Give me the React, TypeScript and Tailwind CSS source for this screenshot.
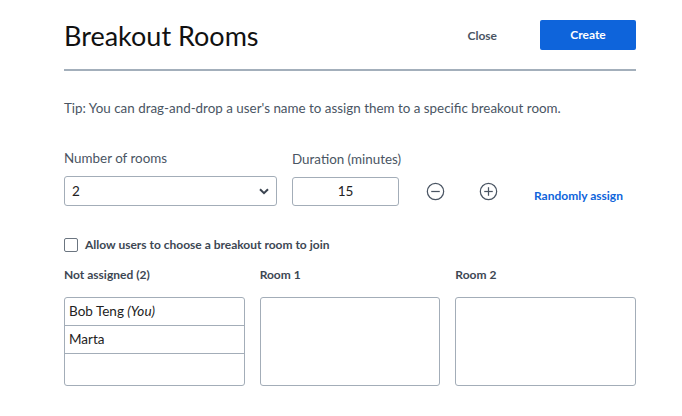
const MinusIcon = () => (
  <svg width="19" height="19" viewBox="0 0 20 20" fill="none" stroke="#4a5563" strokeWidth="1.3">
    <circle cx="10" cy="10" r="8.6" />
    <line x1="5.5" y1="10" x2="14.5" y2="10" />
  </svg>
);

const PlusIcon = () => (
  <svg width="19" height="19" viewBox="0 0 20 20" fill="none" stroke="#4a5563" strokeWidth="1.3">
    <circle cx="10" cy="10" r="8.6" />
    <line x1="5.5" y1="10" x2="14.5" y2="10" />
    <line x1="10" y1="5.5" x2="10" y2="14.5" />
  </svg>
);

const ChevronDown = () => (
  <svg width="10" height="7" viewBox="0 0 10 7" fill="none" stroke="#3b4450" strokeWidth="2">
    <path d="M1 1.2 5 5.2 9 1.2" />
  </svg>
);

const App = () => {
  return (
    <div
      className="w-[682px] h-[416px] bg-white text-[#3d4753] overflow-hidden"
      style={{ fontFamily: "Lato, 'Open Sans', sans-serif" }}
    >
      <div className="mx-[64px] w-[572px]">
        <div className="flex items-center h-[71px] border-b-2 border-[#a3afbb] pt-[1px]">
          <h1 className="text-[27px] text-[#111] leading-none flex-1">Breakout Rooms</h1>
          <button className="text-[12px] font-bold text-[#4a5563] mr-[43px] mt-[1px]">Close</button>
          <button className="w-[96px] h-[30px] bg-[#0e64db] text-white text-[12px] font-bold rounded-[2px]">
            Create
          </button>
        </div>

        <p className="text-[13.4px] mt-[27px] leading-[20px] text-[#4a5563] whitespace-nowrap">
          Tip: You can drag-and-drop a user's name to assign them to a specific breakout room.
        </p>

        <div className="flex items-end mt-[30px]">
          <div className="flex flex-col w-[213px]">
            <label className="text-[13.4px] leading-[20px] text-[#4a5563] whitespace-nowrap">Number of rooms</label>
            <div className="mt-[8px] h-[30px] border border-[#a3adb8] rounded-[3px] flex items-center justify-between px-[7px]">
              <span className="text-[13.5px] text-[#222]">2</span>
              <ChevronDown />
            </div>
          </div>
          <div className="flex flex-col w-[107px] ml-[15px]">
            <label className="text-[13.4px] leading-[20px] text-[#4a5563] whitespace-nowrap">Duration (minutes)</label>
            <div className="mt-[8px] h-[29px] border border-[#a3adb8] rounded-[3px] flex items-center justify-center">
              <span className="text-[13.5px] text-[#222]">15</span>
            </div>
          </div>
          <div className="flex items-center h-[29px] ml-[27px] gap-[34px]">
            <MinusIcon />
            <PlusIcon />
          </div>
          <div className="h-[29px] flex items-center ml-[36px] pt-[8px]">
            <span className="text-[12px] font-bold text-[#0e64db] whitespace-nowrap">Randomly assign</span>
          </div>
        </div>

        <div className="flex items-center mt-[31px] h-[16px]">
          <span className="w-[14px] h-[14px] border border-[#6b7580] rounded-[2px]" />
          <span className="ml-[7px] text-[12px] font-bold text-[#3d4753]">
            Allow users to choose a breakout room to join
          </span>
        </div>

        <div className="grid grid-cols-3 gap-x-[15px] mt-[13px]">
          <div className="text-[12px] font-bold leading-[18px] text-[#3d4753]">Not assigned (2)</div>
          <div className="text-[12px] font-bold leading-[18px] text-[#3d4753]">Room 1</div>
          <div className="text-[12px] font-bold leading-[18px] text-[#3d4753]">Room 2</div>

          <div className="mt-[13px] h-[89px] border border-[#a3adb8] rounded-[3px] flex flex-col">
            <div className="h-[28px] border-b border-[#a3adb8] flex items-center px-[4px] text-[13.5px] text-[#222]">
              Bob Teng&nbsp;<i>(You)</i>
            </div>
            <div className="h-[28px] border-b border-[#a3adb8] flex items-center px-[4px] text-[13.5px] text-[#222]">
              Marta
            </div>
          </div>
          <div className="mt-[13px] h-[89px] border border-[#a3adb8] rounded-[3px]" />
          <div className="mt-[13px] h-[89px] border border-[#a3adb8] rounded-[3px]" />
        </div>
      </div>
    </div>
  );
};

export default App;
